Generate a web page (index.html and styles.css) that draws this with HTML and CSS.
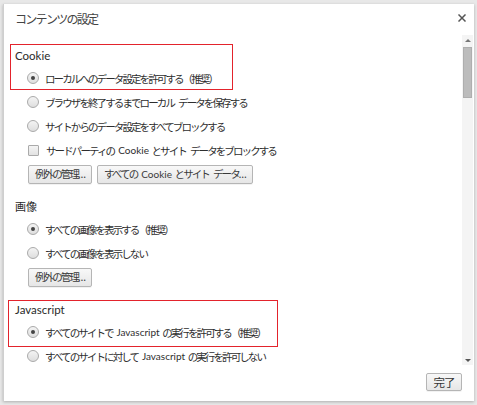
FILE: index.html
```html
<!DOCTYPE html>
<html lang="ja">
<head>
<meta charset="utf-8">
<title>コンテンツの設定</title>
<link rel="stylesheet" href="styles.css">
</head>
<body>
<div class="dialog">
  <div class="header">
    <div class="title">コンテンツの設定</div>
    <button class="close" aria-label="閉じる">
      <svg width="8" height="8" viewBox="0 0 8 8"><path d="M1 1L7 7M7 1L1 7" stroke="#555" stroke-width="1.5" stroke-linecap="square"/></svg>
    </button>
  </div>
  <div class="body">
    <div class="content">
      <section class="section">
        <h2 class="heading">Cookie</h2>
        <label class="option"><span class="radio checked"></span>ローカルへのデータ設定を許可する（推奨）</label>
        <label class="option"><span class="radio"></span>ブラウザを終了するまでローカル<span class="en"> </span>データを保存する</label>
        <label class="option"><span class="radio"></span>サイトからのデータ設定をすべてブロックする</label>
        <label class="option"><span class="checkbox"></span>サードパーティの<span class="en"> Cookie </span>とサイト<span class="en"> </span>データをブロックする</label>
        <div class="buttons">
          <button class="btn">例外の管理…</button>
          <button class="btn">すべての<span class="en"> Cookie </span>とサイト<span class="en"> </span>データ…</button>
        </div>
      </section>
      <section class="section">
        <h2 class="heading jp">画像</h2>
        <label class="option"><span class="radio checked"></span>すべての画像を表示する（推奨）</label>
        <label class="option"><span class="radio"></span>すべての画像を表示しない</label>
        <div class="buttons">
          <button class="btn">例外の管理…</button>
        </div>
      </section>
      <section class="section">
        <h2 class="heading">Javascript</h2>
        <label class="option"><span class="radio checked"></span>すべてのサイトで<span class="en"> Javascript </span>の実行を許可する（推奨）</label>
        <label class="option"><span class="radio"></span>すべてのサイトに対して<span class="en"> Javascript </span>の実行を許可しない</label>
      </section>
      <div class="mark mark-cookie"></div>
      <div class="mark mark-js"></div>
    </div>
    <div class="scrollbar">
      <div class="arrow up"></div>
      <div class="track"><div class="thumb"></div></div>
      <div class="arrow down"></div>
    </div>
  </div>
  <div class="footer">
    <button class="btn done">完了</button>
  </div>
</div>
</body>
</html>
```
FILE: styles.css
```css
html, body {
  margin: 0;
  padding: 0;
}
body {
  width: 477px;
  height: 405px;
  overflow: hidden;
  background: #e8e8e8;
  font-family: Lato, "Noto Sans CJK JP", sans-serif;
  color: #333;
}
.dialog {
  margin: 4px 0 0 3px;
  width: 470px;
  height: 397px;
  background: #fff;
  border-left: 1px solid #cfcfcf;
  box-shadow: 0 1px 3px rgba(0,0,0,0.25);
  display: flex;
  flex-direction: column;
}
.header {
  height: 31px;
  display: flex;
  align-items: flex-start;
  padding: 4px 0 0 11px;
  box-sizing: border-box;
}
.title {
  font-size: 12px;
  letter-spacing: -1.7px;
  line-height: 24px;
  color: #444;
  flex: 1;
}
.close {
  border: 0;
  background: none;
  padding: 0;
  margin: 6px 8px 0 0;
  width: 8px;
  height: 8px;
  display: flex;
}
.body {
  height: 330px;
  display: flex;
}
.content {
  flex: 1;
  position: relative;
  overflow: hidden;
  padding: 10px 0 0 11px;
}
.section {
  margin-bottom: 12px;
}
.heading {
  margin: 0;
  font-size: 11.5px;
  font-weight: normal;
  line-height: 21px;
  height: 21px;
  color: #2a2a2a;
}
.heading.jp {
  font-size: 11px;
}
.option {
  display: flex;
  align-items: center;
  height: 24px;
  padding-left: 12px;
  font-size: 10.5px;
  letter-spacing: -1.9px;
  color: #2e2e2e;
  white-space: pre;
}
.en {
  letter-spacing: 0;
  font-size: 10px;
  margin-left: 1.5px;
}
.radio {
  width: 10px;
  height: 10px;
  border: 1px solid #aaa;
  border-radius: 50%;
  background: linear-gradient(#f4f4f4, #dedede);
  margin-right: 6px;
  position: relative;
  flex: none;
}
.radio.checked::after {
  content: "";
  position: absolute;
  left: 3px;
  top: 3px;
  width: 4px;
  height: 4px;
  border-radius: 50%;
  background: #444;
}
.checkbox {
  width: 9px;
  height: 9px;
  border: 1px solid #aaa;
  border-radius: 1px;
  background: linear-gradient(#f4f4f4, #e2e2e2);
  margin: 0 7px 0 1px;
  flex: none;
}
.buttons {
  display: flex;
  gap: 5px;
  padding: 3px 0 0 13px;
}
.btn {
  height: 19px;
  padding: 0 7px 0 6px;
  border: 1px solid #b5b5b5;
  border-radius: 2px;
  background: linear-gradient(#f8f8f8, #e6e6e6);
  font-family: inherit;
  font-size: 10.5px;
  letter-spacing: -1.9px;
  color: #3a3a3a;
  line-height: 17px;
  white-space: pre;
  box-shadow: 0 1px 0 rgba(0,0,0,0.05);
}
.mark {
  position: absolute;
  border: 1px solid #e3232c;
  pointer-events: none;
}
.mark-cookie {
  left: 6px;
  top: 9px;
  width: 221px;
  height: 44px;
}
.mark-js {
  left: 4px;
  top: 265px;
  width: 268px;
  height: 45px;
}
.scrollbar {
  width: 11px;
  margin-right: 1px;
  background: #f4f4f4;
  display: flex;
  flex-direction: column;
}
.arrow {
  height: 11px;
  position: relative;
}
.arrow::after {
  content: "";
  position: absolute;
  left: 3px;
  border-left: 3px solid transparent;
  border-right: 3px solid transparent;
}
.arrow.up::after {
  top: 4px;
  border-bottom: 3px solid #777;
}
.arrow.down::after {
  top: 5px;
  border-top: 3px solid #555;
}
.track {
  flex: 1;
  padding: 1px 1px 0 1px;
}
.thumb {
  height: 51px;
  background: #bcbcbc;
  border: 1px solid #aeaeae;
  box-sizing: border-box;
}
.footer {
  flex: 1;
  display: flex;
  justify-content: flex-end;
  align-items: flex-start;
  padding: 8px 12px 0 0;
}
.done {
  width: 36px;
  height: 18px;
  padding: 0;
  font-size: 11.5px;
  letter-spacing: -1px;
  color: #333;
}
```
